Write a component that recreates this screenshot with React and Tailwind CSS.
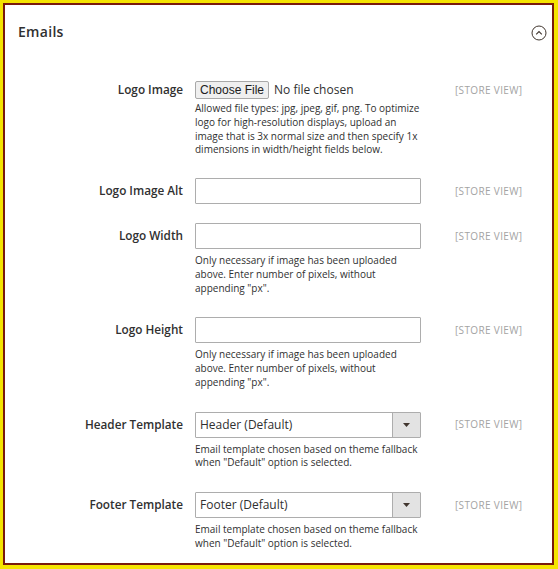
import React from "react";

const font = { fontFamily: '"Open Sans", "Noto Sans", sans-serif' };

function Label({ children, h = "h-[26px]" }) {
  return (
    <div className={`w-[178px] shrink-0 flex items-center justify-end ${h} text-[11.75px] text-[#303030] font-semibold`}>
      {children}
    </div>
  );
}

function Scope({ h = "h-[26px]" }) {
  return (
    <div className={`ml-[34px] flex items-center ${h} text-[10px] text-[#a3a3a3] tracking-[0.35px]`}>
      [STORE VIEW]
    </div>
  );
}

function Note({ children, cls = "mt-[5px] mb-[3px]" }) {
  return <div className={`${cls} text-[10px] leading-[13.75px] text-[#303030]`}>{children}</div>;
}

function TextInput() {
  return <div className="h-[26px] w-[226px] border border-[#adadad] rounded-[1px] bg-white" />;
}

function Select({ value }) {
  return (
    <div className="h-[26px] w-[226px] border border-[#adadad] rounded-[1px] bg-white flex">
      <div className="flex-1 flex items-center pl-[4px] text-[12px] text-[#303030]">{value}</div>
      <div className="w-[28px] bg-[#e3e3e3] border-l border-[#adadad] flex items-center justify-center">
        <svg width="7" height="4" viewBox="0 0 7 4">
          <path d="M0 0 L7 0 L3.5 4 Z" fill="#41362f" />
        </svg>
      </div>
    </div>
  );
}

export default function App() {
  return (
    <div className="w-[558px] h-[569px] bg-[#f5e400] pt-[3px] pl-[3px] pr-[4px] pb-[4px]" style={font}>
      <div className="w-full h-full border-2 border-[#7a1a0c] bg-white relative">
        <div className="flex items-center justify-between pl-[13px] pr-[5px] pt-[17px]">
          <div className="text-[14px] leading-[20px] font-semibold text-[#303030] tracking-[0.3px]">Emails</div>
          <svg width="16" height="16" viewBox="0 0 16 16" className="mt-[1px]">
            <circle cx="8" cy="8" r="7" fill="none" stroke="#41362f" strokeWidth="1" />
            <path d="M5.2 9.3 L8 6.5 L10.8 9.3" fill="none" stroke="#41362f" strokeWidth="1.1" />
          </svg>
        </div>

        <div className="mt-[39px] flex flex-col">
          {/* Logo Image */}
          <div className="flex items-start pb-[19px]">
            <Label h="h-[18px]">Logo Image</Label>
            <div className="ml-[12px] w-[226px]">
              <div className="flex items-center h-[18px]">
                <div
                  className="h-[18px] px-[4px] flex items-center bg-[#efefef] border border-[#a8a8a8] rounded-[2px] text-[12px] text-[#202020]"
                  style={{ fontFamily: '"Liberation Sans", Arial, sans-serif' }}
                >
                  Choose File
                </div>
                <span className="ml-[5px] text-[12px] text-[#303030]">No file chosen</span>
              </div>
              <Note cls="mt-[3px] mb-[2px]">
                Allowed file types: jpg, jpeg, gif, png. To optimize logo for high-resolution displays, upload an image that is 3x normal size and then specify 1x dimensions in width/height fields below.
              </Note>
            </div>
            <Scope h="h-[18px]" />
          </div>

          {/* Logo Image Alt */}
          <div className="flex items-start pb-[19px]">
            <Label>Logo Image Alt</Label>
            <div className="ml-[12px] w-[226px]">
              <TextInput />
            </div>
            <Scope />
          </div>

          {/* Logo Width */}
          <div className="flex items-start pb-[19px]">
            <Label>Logo Width</Label>
            <div className="ml-[12px] w-[226px]">
              <TextInput />
              <Note>Only necessary if image has been uploaded above. Enter number of pixels, without appending "px".</Note>
            </div>
            <Scope />
          </div>

          {/* Logo Height */}
          <div className="flex items-start pb-[19px]">
            <Label>Logo Height</Label>
            <div className="ml-[12px] w-[226px]">
              <TextInput />
              <Note>Only necessary if image has been uploaded above. Enter number of pixels, without appending "px".</Note>
            </div>
            <Scope />
          </div>

          {/* Header Template */}
          <div className="flex items-start pb-[19px]">
            <Label>Header Template</Label>
            <div className="ml-[12px] w-[226px]">
              <Select value="Header (Default)" />
              <Note>Email template chosen based on theme fallback when "Default" option is selected.</Note>
            </div>
            <Scope />
          </div>

          {/* Footer Template */}
          <div className="flex items-start pb-[19px]">
            <Label>Footer Template</Label>
            <div className="ml-[12px] w-[226px]">
              <Select value="Footer (Default)" />
              <Note>Email template chosen based on theme fallback when "Default" option is selected.</Note>
            </div>
            <Scope />
          </div>
        </div>
      </div>
    </div>
  );
}
